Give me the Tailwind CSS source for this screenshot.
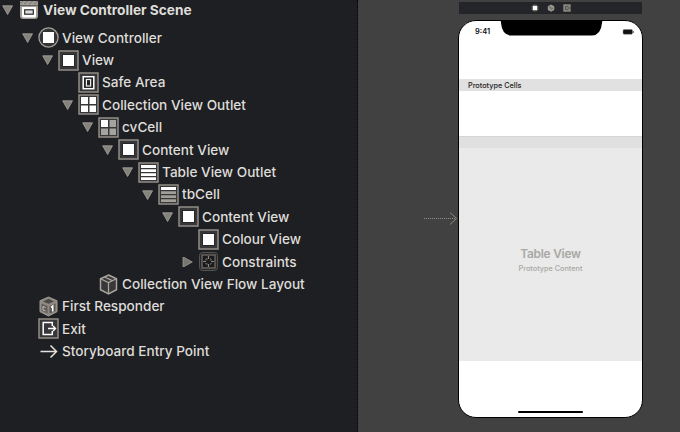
<!DOCTYPE html>
<html lang="en">
<head>
<meta charset="utf-8">
<title>View Controller Scene</title>
<script src="https://cdn.jsdelivr.net/npm/@tailwindcss/browser@4"></script>
</head>
<body class="w-[680px] h-[432px] overflow-hidden bg-[#414141] font-['Inter','Liberation_Sans',sans-serif]">
<svg class="hidden">
  <defs>
    <symbol id="down" viewBox="0 0 11 10"><path d="M.7.8h9.8L5.6 9.5z" fill="#85827c" stroke="#aaa69e" stroke-width=".8"/></symbol>
    <symbol id="right" viewBox="0 0 11 10"><path d="M1-.2v10.4L10.3 5z" fill="#77756f" stroke="#a09c95" stroke-width=".8"/></symbol>
    <symbol id="box" viewBox="0 0 21 21"><rect x="1" y="1" width="19" height="19" fill="#37373a" stroke="#938d86" stroke-width="1.5"/></symbol>
    <symbol id="view" viewBox="0 0 21 21"><use href="#box"/><rect x="4.500" y="4.500" width="12" height="12" fill="#18191c"/><rect x="5" y="5" width="11" height="11" fill="#fff"/></symbol>
    <symbol id="scene" viewBox="0 0 21 21"><path d="M1 1h18v15q0 3-3 3H4q-3 0-3-3z" fill="#a09d98"/><path d="M1 3.500 4 1M5 4l4-3M10 4l4-3M15 4l4-3" stroke="#77746f" stroke-width="1"/><path d="M1 5.500h18" stroke="#55534f" stroke-width=".8"/><path d="M3 7h14v9q0 1.500-1.500 1.500h-11Q3 17.500 3 16z" fill="#fff"/><rect x="5.700" y="9.800" width="8.600" height="4.400" fill="#ddd" stroke="#29292b" stroke-width="1.200"/></symbol>
    <symbol id="controller" viewBox="0 0 21 21"><circle cx="10.500" cy="10.500" r="9.600" fill="#343436" stroke="#a5a098" stroke-width="1.300"/><rect x="5" y="5" width="11" height="11" fill="#fff"/></symbol>
    <symbol id="safe" viewBox="0 0 21 21"><use href="#box"/><rect x="5.200" y="4.700" width="10.600" height="12" fill="#222" stroke="#fff" stroke-width="1.500"/><rect x="8.400" y="7.500" width="4.200" height="6.500" fill="none" stroke="#eee" stroke-width="1.200"/></symbol>
    <symbol id="collection" viewBox="0 0 21 21"><use href="#box"/><path d="M3 3h7v7H3zM11.500 3h6.500v7h-6.500zM3 11.500h7V18H3zM11.500 11.500h6.500V18h-6.500z" fill="#fff"/></symbol>
    <symbol id="ccell" viewBox="0 0 21 21"><use href="#box"/><path d="M11.500 3h6.500v7h-6.500zM3 11.500h7V18H3zM11.500 11.500h6.500V18h-6.500z" fill="#a5a39f"/><path d="M3 3h7v7H3z" fill="#fff"/></symbol>
    <symbol id="table" viewBox="0 0 21 21"><use href="#box"/><path d="M3 3h15v3H3zM3 7.200h15v2.800H3zM3 11.200h15V14H3zM3 15.200h15V18H3z" fill="#fff"/></symbol>
    <symbol id="tcell" viewBox="0 0 21 21"><use href="#box"/><path d="M3 7.200h15v2.800H3zM3 11.200h15V14H3zM3 15.200h15V18H3z" fill="#a19e99"/><path d="M3 3h15v3H3z" fill="#fff"/></symbol>
    <symbol id="constraints" viewBox="0 0 21 21"><rect x="1.500" y="1.500" width="18" height="18" rx="3" fill="#28282b" stroke="#55534f"/><rect x="4" y="4" width="13" height="13" fill="#1b1b1e" stroke="#77736c" stroke-width="1.200"/><path d="M10.500 5v3M10.500 13v3M5 10.500h3M13 10.500h3" stroke="#8b867f" stroke-width="1.200"/><path d="M8 7h1.500v2.500H7V8h1zM12 7h1v1h1v1.500h-2zM7 12h2.500v2H8v-1H7zM12 12h2v1h-1v1h-1z" fill="#56534f"/></symbol>
    <symbol id="cube" viewBox="0 0 21 21"><path d="m10.500 1 8 3.700v11l-8 4.300-8-4.300v-11z" fill="#38383a" stroke="#aaa59c" stroke-width="1.500"/><path d="m3 5 7.500 3.600L18 5M10.500 8.600V19M6.500 3l7.700 3.700" fill="none" stroke="#aaa59c" stroke-width="1.300"/></symbol>
    <symbol id="responder" viewBox="0 0 21 21"><path d="m10.500 1 8.500 3.700v11l-8.500 4.300L2 15.700v-11z" fill="#8e8982" stroke="#9d9890"/><path d="m5 5.500 5.500-2.700L16 5.500l-5.500 2.300z" fill="#4b4947"/><path d="m3.500 7.500 6 2.500v7.500l-6-3z" fill="#605d59"/><path d="M7.500 11.500 5 10.500v3.500l2.500 1" fill="none" stroke="#c5c0b8" stroke-width="1"/><path d="m11.500 10 6-2.500v7.500l-6 2.500z" fill="#5b5855"/><path d="m13 11.300 1.700-1.200v5.500" fill="none" stroke="#fff" stroke-width="1.600"/></symbol>
    <symbol id="exit" viewBox="0 0 21 21"><use href="#box"/><path d="M14.300 8V4.500H5.200v12h9.100V13" fill="none" stroke="#fff" stroke-width="1.500"/><path d="M10 10.500h7.500M15 8l2.500 2.500L15 13" fill="none" stroke="#fff" stroke-width="1.400"/></symbol>
    <symbol id="entry" viewBox="0 0 21 21"><path d="M2.500 10.500h16M12.500 4.500l6 6-6 6" fill="none" stroke="#e4e1dc" stroke-width="1.500"/></symbol>
  </defs>
</svg>
<main class="flex h-full">
  <section class="w-[358px] shrink-0 h-full bg-[#1e1f23] border-r border-dotted border-black text-[#deddd9] text-[13.6px] font-medium whitespace-nowrap">
    <div class="flex items-center h-[20px] mb-[6.600px] pl-[2px] font-bold"><svg class="w-[11px] h-[10px] mr-[6px]"><use href="#down"/></svg><svg class="w-[21px] h-[21px] mr-[3px]"><use href="#scene"/></svg><span class="text-[13.7px]">View Controller Scene</span></div>
    <div class="flex items-center h-[22.4px] pl-[22px]"><svg class="w-[11px] h-[10px] mr-[5px]"><use href="#down"/></svg><svg class="w-[21px] h-[21px] mr-[3px]"><use href="#controller"/></svg><span>View Controller</span></div>
    <div class="flex items-center h-[22.4px] pl-[42px]"><svg class="w-[11px] h-[10px] mr-[5px]"><use href="#down"/></svg><svg class="w-[21px] h-[21px] mr-[3px]"><use href="#view"/></svg><span>View</span></div>
    <div class="flex items-center h-[22.4px] pl-[78px]"><svg class="w-[21px] h-[21px] mr-[3px]"><use href="#safe"/></svg><span>Safe Area</span></div>
    <div class="flex items-center h-[22.4px] pl-[62px]"><svg class="w-[11px] h-[10px] mr-[5px]"><use href="#down"/></svg><svg class="w-[21px] h-[21px] mr-[3px]"><use href="#collection"/></svg><span>Collection View Outlet</span></div>
    <div class="flex items-center h-[22.4px] pl-[82px]"><svg class="w-[11px] h-[10px] mr-[5px]"><use href="#down"/></svg><svg class="w-[21px] h-[21px] mr-[3px]"><use href="#ccell"/></svg><span>cvCell</span></div>
    <div class="flex items-center h-[22.4px] pl-[102px]"><svg class="w-[11px] h-[10px] mr-[5px]"><use href="#down"/></svg><svg class="w-[21px] h-[21px] mr-[3px]"><use href="#view"/></svg><span>Content View</span></div>
    <div class="flex items-center h-[22.4px] pl-[122px]"><svg class="w-[11px] h-[10px] mr-[5px]"><use href="#down"/></svg><svg class="w-[21px] h-[21px] mr-[3px]"><use href="#table"/></svg><span>Table View Outlet</span></div>
    <div class="flex items-center h-[22.4px] pl-[142px]"><svg class="w-[11px] h-[10px] mr-[5px]"><use href="#down"/></svg><svg class="w-[21px] h-[21px] mr-[3px]"><use href="#tcell"/></svg><span>tbCell</span></div>
    <div class="flex items-center h-[22.4px] pl-[162px]"><svg class="w-[11px] h-[10px] mr-[5px]"><use href="#down"/></svg><svg class="w-[21px] h-[21px] mr-[3px]"><use href="#view"/></svg><span>Content View</span></div>
    <div class="flex items-center h-[22.4px] pl-[198px]"><svg class="w-[21px] h-[21px] mr-[3px]"><use href="#view"/></svg><span>Colour View</span></div>
    <div class="flex items-center h-[22.4px] pl-[182px]"><svg class="w-[11px] h-[10px] mr-[5px] overflow-visible"><use href="#right"/></svg><svg class="w-[21px] h-[21px] mr-[3px]"><use href="#constraints"/></svg><span>Constraints</span></div>
    <div class="flex items-center h-[22.4px] pl-[98px]"><svg class="w-[21px] h-[21px] mr-[3px]"><use href="#cube"/></svg><span>Collection View Flow Layout</span></div>
    <div class="flex items-center h-[22.4px] pl-[38px]"><svg class="w-[21px] h-[21px] mr-[3px]"><use href="#responder"/></svg><span>First Responder</span></div>
    <div class="flex items-center h-[22.4px] pl-[38px]"><svg class="w-[21px] h-[21px] mr-[3px]"><use href="#exit"/></svg><span>Exit</span></div>
    <div class="flex items-center h-[22.4px] pl-[38px]"><svg class="w-[21px] h-[21px] mr-[3px]"><use href="#entry"/></svg><span>Storyboard Entry Point</span></div>
  </section>
  <section class="flex flex-1 pt-[2px]">
    <div class="w-[100px] pl-[66px] pt-[210px]">
      <svg class="w-[34px] h-[14px]" viewBox="0 0 34 14" fill="none" stroke="#969186"><path d="M0 6.500h32" stroke-dasharray="1 1"/><path d="m26 .5 6.500 6-6.500 6" stroke-width=".9"/></svg>
    </div>
    <div class="w-[185px]">
      <div class="ml-[1px] w-[183px] h-[12px] bg-[#242529] flex items-center justify-center gap-[8px]">
        <svg class="w-[8px] h-[8px]" viewBox="0 0 8 8"><circle cx="4" cy="4" r="3.500" fill="#6b6964"/><path d="M2 2h4v4H2z" fill="#fff"/></svg>
        <svg class="w-[8px] h-[8px]" viewBox="0 0 8 8"><path d="m4 .5 3.300 1.700v3.900L4 7.700.8 6.100V2.200z" fill="#99958e"/><path d="m2 2.500 2 1.200V5.500M4.500 5l1.500-1" fill="none" stroke="#5b5a57" stroke-width=".8"/></svg>
        <svg class="w-[8px] h-[8px]" viewBox="0 0 8 8"><path d="M.3.300h7.400v7.400H.3z" fill="#8d8982"/><path d="M5.500 2.500h-3v3h3M4.500 4H8" fill="none" stroke="#4a4845" stroke-width=".9"/></svg>
      </div>
      <div class="mt-[6px] h-[398px] border border-black rounded-[18px] bg-white overflow-hidden text-[#111]">
        <div class="flex h-[58px]">
          <div class="w-[40px] pl-[16px] pt-[5px] text-[7.5px] leading-[12px] font-semibold">9:41</div>
          <svg class="w-[106px] h-[15px] shrink-0" viewBox="0 0 106 15"><path d="M0-1h106q-3 0-3 3-1 12-10 12.500H12Q3 14 2 2q0-3-2-3z" fill="#000"/></svg>
          <svg class="w-[13px] h-[8px] mt-[7px] ml-[17px]" viewBox="0 0 13 8"><rect x="1" y="1.500" width="9.500" height="4.800" rx="1.200" fill="#111" stroke="#888" stroke-width=".5"/><path d="M11.300 3v2" stroke="#555"/></svg>
        </div>
        <div class="h-[12px] bg-[#e1e1e1] pl-[9px] text-[7.3px] leading-[13px] font-medium text-[#25231f]">Prototype Cells</div>
        <div class="h-[45px]"></div>
        <div class="h-[12px] bg-[#e0e0e0] border-t border-[#d5d5d5]"></div>
        <div class="h-[213px] bg-[#eaeaea] pt-[98px] text-center text-[#a9a8a4]">
          <div class="text-[11.9px] leading-[16px] font-semibold tracking-[-0.25px]">Table View</div>
          <div class="text-[7.3px] leading-[14px] font-medium">Prototype Content</div>
        </div>
        <div class="h-[50px]"></div>
        <div class="mx-auto w-[65px] h-[2px] rounded-full bg-black"></div>
      </div>
    </div>
  </section>
</main>
</body>
</html>
